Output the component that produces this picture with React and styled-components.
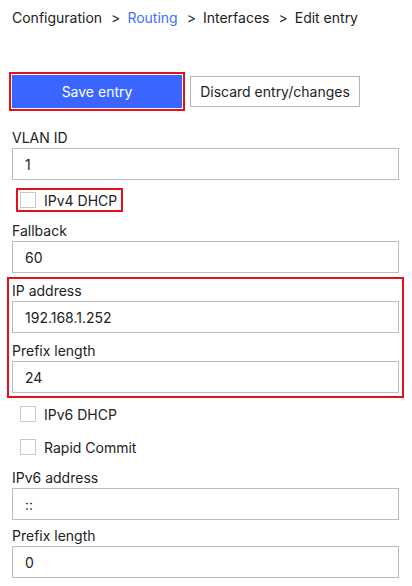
import React, { useState } from 'react';
import styled, { createGlobalStyle } from 'styled-components';

const GlobalStyle = createGlobalStyle`
  body {
    margin: 0;
    background: #fff;
    font-family: Inter, 'Noto Sans', sans-serif;
    color: #222;
  }
`;

const Page = styled.div`
  padding: 8px 13px 0 12px;
  font-size: 14px;
`;

const Breadcrumb = styled.nav`
  display: flex;
  align-items: center;
  line-height: 20px;
  font-size: 14px;
`;

const Crumb = styled.span`
  color: ${(p) => (p.active ? '#3f6fff' : '#222')};
`;

const Sep = styled.span`
  margin: 0 7px 0 9px;
  color: #333;
`;

const Toolbar = styled.div`
  display: flex;
  align-items: center;
  gap: 8px;
  margin-top: 47px;
`;

const Button = styled.button`
  width: 170px;
  height: ${(p) => (p.primary ? '33px' : '31px')};
  font-family: inherit;
  font-size: 14px;
  cursor: pointer;
  color: ${(p) => (p.primary ? '#fff' : '#222')};
  background: ${(p) => (p.primary ? '#3a66ff' : '#fff')};
  border: ${(p) => (p.primary ? 'none' : '1px solid #b4b4b4')};
  box-shadow: ${(p) => (p.marked ? '0 0 0 1px #fff, 0 0 0 3px #e5101a' : 'none')};
`;

const Field = styled.div`
  display: flex;
  flex-direction: column;
  margin-top: ${(p) => p.top}px;
`;

const Label = styled.label`
  line-height: 18px;
  margin-bottom: 1px;
`;

const Input = styled.input`
  box-sizing: border-box;
  width: 100%;
  height: 32px;
  padding: 0 12px;
  border: 1px solid #bcbcbc;
  font-family: inherit;
  font-size: 14px;
  color: #222;
  outline: none;
`;

const Group = styled.div`
  margin-top: ${(p) => p.top}px;
  outline: 2px solid #e5101a;
  outline-offset: 3px;
  display: flex;
  flex-direction: column;
  gap: 9px;
`;

const Check = styled.label`
  display: flex;
  align-items: center;
  gap: 8px;
  width: fit-content;
  height: 16px;
  margin: ${(p) => p.top}px 0 0 8px;
  padding-right: ${(p) => (p.marked ? '2px' : '0')};
  outline: ${(p) => (p.marked ? '2px solid #e5101a' : 'none')};
  outline-offset: 2px;
  cursor: pointer;
`;

const Box = styled.span`
  box-sizing: border-box;
  width: 16px;
  height: 16px;
  border: 1px solid #c8c8c8;
  background: ${(p) => (p.checked ? '#3a66ff' : '#fff')};
`;

function TextField({ label, value, top }) {
  return (
    <Field top={top}>
      <Label>{label}</Label>
      <Input defaultValue={value} />
    </Field>
  );
}

function CheckField({ label, top, marked }) {
  const [checked, setChecked] = useState(false);
  return (
    <Check top={top} marked={marked} onClick={() => setChecked(!checked)}>
      <Box checked={checked} />
      <span>{label}</span>
    </Check>
  );
}

export default function App() {
  return (
    <>
      <GlobalStyle />
      <Page>
        <Breadcrumb>
          <Crumb>Configuration</Crumb>
          <Sep>&gt;</Sep>
          <Crumb active>Routing</Crumb>
          <Sep>&gt;</Sep>
          <Crumb>Interfaces</Crumb>
          <Sep>&gt;</Sep>
          <Crumb>Edit entry</Crumb>
        </Breadcrumb>

        <Toolbar>
          <Button primary marked>
            Save entry
          </Button>
          <Button>Discard entry/changes</Button>
        </Toolbar>

        <TextField label="VLAN ID" value="1" top={21} />
        <CheckField label="IPv4 DHCP" top={12} marked />
        <TextField label="Fallback" value="60" top={14} />

        <Group top={9}>
          <TextField label="IP address" value="192.168.1.252" top={0} />
          <TextField label="Prefix length" value="24" top={0} />
        </Group>

        <CheckField label="IPv6 DHCP" top={13} />
        <CheckField label="Rapid Commit" top={17} />
        <TextField label="IPv6 address" value="::" top={14} />
        <TextField label="Prefix length" value="0" top={7} />
      </Page>
    </>
  );
}
